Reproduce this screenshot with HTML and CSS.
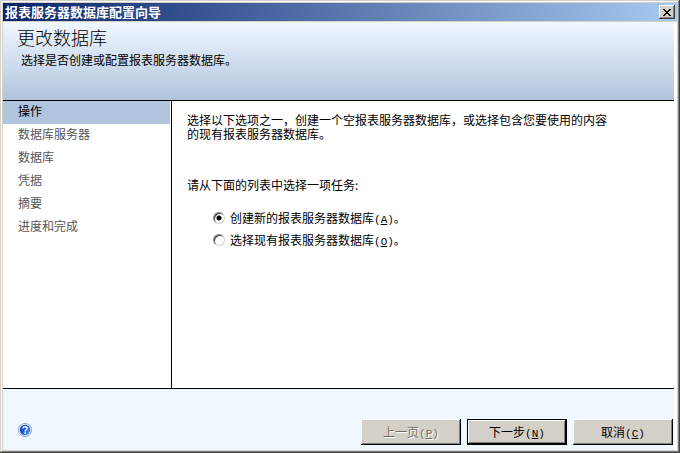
FILE: index.html
```html
<!DOCTYPE html>
<html lang="zh-CN">
<head>
    <meta charset="UTF-8">
    <meta name="viewport" content="width=device-width, initial-scale=1.0">
    <title>报表服务器数据库配置向导</title>
    <link rel="stylesheet" href="styles.css">
</head>
<body>
    <div class="window">
        <div class="titlebar">
            <span class="title">报表服务器数据库配置向导</span>
            <button type="button" class="close" aria-label="关闭">
                <svg width="8" height="7" viewBox="0 0 8 7" shape-rendering="crispEdges">
                    <path d="M0 0h2v1h1v1h2v-1h1v-1h2v1h-1v1h-1v1h-1v1h1v1h1v1h1v1h-2v-1h-1v-1h-2v1h-1v1h-2v-1h1v-1h1v-1h1v-1h-1v-1h-1v-1h-1z" fill="#000"/>
                </svg>
            </button>
        </div>
        <div class="client">
            <header class="banner">
                <h1>更改数据库</h1>
                <p>选择是否创建或配置报表服务器数据库。</p>
            </header>
            <div class="content">
                <ul class="steps">
                    <li class="active">操作</li>
                    <li>数据库服务器</li>
                    <li>数据库</li>
                    <li>凭据</li>
                    <li>摘要</li>
                    <li>进度和完成</li>
                </ul>
                <form class="panel" id="wizardForm">
                    <p class="intro">选择以下选项之一，创建一个空报表服务器数据库，或选择包含您要使用的内容的现有报表服务器数据库。</p>
                    <p class="prompt">请从下面的列表中选择一项任务:</p>
                    <div class="option">
                        <input type="radio" id="createDb" name="task" value="create" checked>
                        <label for="createDb">创建新的报表服务器数据库<span class="key">(<u>A</u>)</span>。</label>
                    </div>
                    <div class="option">
                        <input type="radio" id="existingDb" name="task" value="existing">
                        <label for="existingDb">选择现有报表服务器数据库<span class="key">(<u>O</u>)</span>。</label>
                    </div>
                </form>
            </div>
            <footer class="footer">
                <button type="button" class="help" aria-label="帮助">
                    <svg width="14" height="14" viewBox="0 0 14 14">
                        <defs>
                            <linearGradient id="ball" x1="0" y1="0" x2="1" y2="1">
                                <stop offset="0" stop-color="#1238b8"/>
                                <stop offset="0.5" stop-color="#2058e0"/>
                                <stop offset="1" stop-color="#50b0ff"/>
                            </linearGradient>
                        </defs>
                        <circle cx="7" cy="7" r="6.5" fill="#e8f0fa" stroke="#8ba3c4"/>
                        <circle cx="7" cy="7" r="5.2" fill="url(#ball)"/>
                        <path d="M5 5.6C5 3.2 9.1 3.2 9.1 5.5C9.1 6.9 7.1 6.8 7.1 8.4" fill="none" stroke="#fff" stroke-width="1.5"/>
                        <rect x="6.3" y="9.3" width="1.6" height="1.5" fill="#fff"/>
                    </svg>
                </button>
                <div class="buttons">
                    <button type="button" class="btn" disabled>上一页<span class="key">(<u>P</u>)</span></button>
                    <button type="submit" form="wizardForm" class="btn default">下一步<span class="key">(<u>N</u>)</span></button>
                    <button type="button" class="btn">取消<span class="key">(<u>C</u>)</span></button>
                </div>
            </footer>
        </div>
    </div>
</body>
</html>
```
FILE: styles.css
```css
* {
    box-sizing: border-box;
}
body {
    margin: 0;
    background: #d4d0c8;
    font-family: "Noto Sans CJK SC", sans-serif;
    font-size: 12px;
    line-height: 14px;
    color: #000;
}
h1, p, ul {
    margin: 0;
    padding: 0;
}
button {
    font: inherit;
    color: inherit;
    padding: 0;
    border: none;
    border-radius: 0;
}
svg {
    display: block;
}

/* window frame */
.window {
    display: flex;
    flex-direction: column;
    min-height: 100vh;
    padding: 3px;
    background: #d4d0c8;
    box-shadow: inset -1px -1px #404040, inset 1px 1px #d4d0c8, inset -2px -2px #808080, inset 2px 2px #fff;
}
.titlebar {
    display: flex;
    align-items: center;
    justify-content: space-between;
    height: 18px;
    margin-bottom: 1px;
    padding: 0 2px;
    background: linear-gradient(to right, #0a246a, #a6caf0);
    color: #fff;
    font-size: 13px;
    font-weight: bold;
}
.close {
    display: flex;
    align-items: center;
    justify-content: center;
    width: 16px;
    height: 14px;
    background: #d4d0c8;
    box-shadow: inset -1px -1px #404040, inset 1px 1px #fff, inset -2px -2px #808080;
}
.client {
    flex: 1;
    display: flex;
    flex-direction: column;
    padding-right: 3px;
    background: #fff;
}

.banner {
    height: 79px;
    padding: 5px 14px;
    border-bottom: 1px solid #000;
    background: linear-gradient(#f0f8ff, #b0c4de);
}
.banner h1 {
    font-size: 18px;
    line-height: 20px;
    font-weight: 300;
}
.banner p {
    padding: 6px 4px;
}

.content {
    flex: 1;
    display: flex;
    border-bottom: 1px solid #000;
}
.steps {
    flex: 0 0 169px;
    padding-right: 1px;
    border-right: 1px solid #000;
    list-style: none;
    color: #555;
}
.steps li {
    height: 23px;
    padding-left: 15px;
    line-height: 20px;
}
.steps .active {
    background: #b0c4de;
    color: #000;
}
.panel {
    flex: 1;
    padding: 12px 60px 12px 15px;
}
.intro {
    margin-bottom: 37px;
}
.prompt {
    margin-bottom: 19px;
}
.option {
    display: flex;
    align-items: center;
    gap: 5px;
    height: 14px;
    margin: 0 0 8px 26px;
}
.option input {
    appearance: none;
    width: 12px;
    height: 12px;
    margin: 0;
    border: 1px solid;
    border-color: #808080 #d4d0c8 #d4d0c8 #808080;
    border-radius: 50%;
    background: #fff;
    box-shadow: inset 1px 1px #404040;
}
.option input:checked {
    background: radial-gradient(circle, #000 2px, #fff 3px);
}

/* shortcut letters */
.key {
    font-family: "Liberation Mono", monospace;
    font-size: 11px;
    line-height: 12px;
}

.footer {
    display: flex;
    align-items: flex-end;
    justify-content: space-between;
    padding: 30px 1px 5px 15px;
    background: #f0f8ff;
}
.help {
    margin-bottom: 8px;
    background: none;
}
.buttons {
    display: flex;
    gap: 6px;
}
.btn {
    width: 100px;
    height: 26px;
    background: #d4d0c8;
    box-shadow: inset -1px -1px #000, inset 1px 1px #fff, inset -2px -2px #808080;
}
.btn.default {
    border: 1px solid #000;
}
.btn:disabled {
    color: #706c64;
    text-shadow: 1px 1px #fff;
}
```
